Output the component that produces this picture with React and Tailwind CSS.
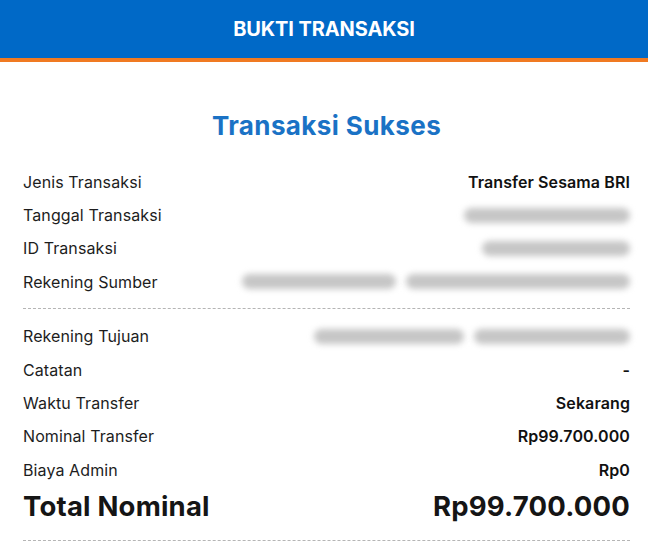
const font = { fontFamily: "Inter, 'Noto Sans', sans-serif" };

const Blur = ({ w }) => (
  <div className="h-[15px] rounded-full bg-[#c6c6c6] blur-[3px]" style={{ width: w }} />
);

const Row = ({ label, children }) => (
  <div className="flex h-[33.4px] items-center justify-between">
    <span className="text-[16px] tracking-[0.1px] text-[#1d1d1d]">{label}</span>
    <div className="flex items-center gap-[10px] text-[16px] font-semibold tracking-[0.1px] text-[#111]">{children}</div>
  </div>
);

export default function App() {
  return (
    <div className="min-h-[550px] bg-white" style={font}>
      {/* header */}
      <div className="flex h-[58px] items-center justify-center bg-[#0069c7]">
        <h1 className="text-[20px] font-bold tracking-[-0.1px] text-white">BUKTI TRANSAKSI</h1>
      </div>
      <div className="h-[4px] bg-[#f07a22]" />

      <div className="pl-[23px] pr-[18px]">
        <h2 className="mt-[48px] text-center text-[26px] font-bold leading-[32px] tracking-[0.4px] text-[#1a72c5]">
          Transaksi Sukses
        </h2>

        <div className="mt-[23px]">
          <Row label="Jenis Transaksi">Transfer Sesama BRI</Row>
          <Row label="Tanggal Transaksi"><Blur w={166} /></Row>
          <Row label="ID Transaksi"><Blur w={148} /></Row>
          <Row label="Rekening Sumber"><Blur w={154} /><Blur w={224} /></Row>
        </div>

        <div className="mt-[9px] border-t border-dashed border-[#b5b5b5]" />

        <div className="mt-[11px]">
          <Row label="Rekening Tujuan"><Blur w={150} /><Blur w={156} /></Row>
          <Row label="Catatan">-</Row>
          <Row label="Waktu Transfer">Sekarang</Row>
          <Row label="Nominal Transfer">Rp99.700.000</Row>
          <Row label="Biaya Admin">Rp0</Row>
        </div>

        <div className="flex h-[40px] items-center justify-between text-[27.5px] font-bold tracking-[0.2px] text-[#151515]">
          <span>Total Nominal</span>
          <span>Rp99.700.000</span>
        </div>

        <div className="mt-[13px] border-t border-dashed border-[#b5b5b5]" />
      </div>
    </div>
  );
}
